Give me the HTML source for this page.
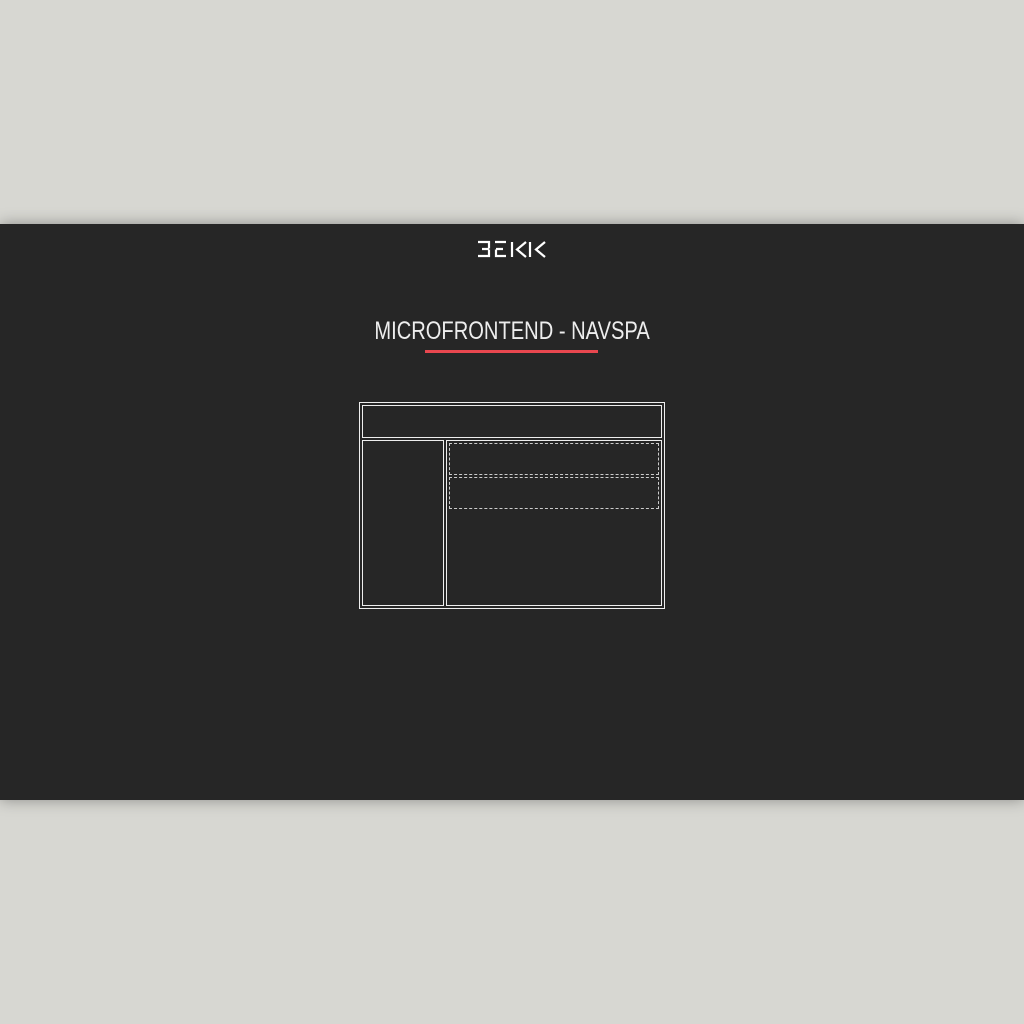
<!DOCTYPE html>
<html><head><style>
body{margin:0;width:1024px;height:1024px;background:#d7d7d2;position:relative;overflow:hidden;font-family:"Liberation Sans",sans-serif}
.band{position:absolute;left:0;top:224px;width:1024px;height:576px;background:#262626;box-shadow:0 0 14px rgba(0,0,0,.35)}
.t{position:absolute;left:0;width:1024px;top:316px;text-align:center;color:#eee;font-size:25px;line-height:30px}
.t span{display:inline-block;transform:scaleX(.805)}
.r{position:absolute;left:425px;top:350px;width:173px;height:3px;background:#e8474f}
.b{position:absolute;border:1.5px solid #eee;box-sizing:border-box}
.d{position:absolute;border:1.5px dashed #ccc;box-sizing:border-box}
</style></head><body>
<div class="band"></div>
<svg style="position:absolute;left:0;top:0" width="1024" height="300">
<g fill="none" stroke="#fff" stroke-width="2.2">
<path d="M478 242H489V248.5M482 249H489M489 249.5V256H478"/>
<path d="M506 242H495M496 249H503M496 249.5V256H506"/>
<path d="M512 242V257M526 242L517 249.5L526 257"/>
<path d="M530 242V257M545 242L536 249.5L545 257"/>
</g></svg>
<div class="t"><span>MICROFRONTEND - NAVSPA</span></div>
<div class="r"></div>
<div class="b" style="left:359px;top:402px;width:306px;height:207px"></div>
<div class="b" style="left:362px;top:405px;width:300px;height:33px"></div>
<div class="b" style="left:362px;top:440px;width:82px;height:166px"></div>
<div class="b" style="left:446px;top:440px;width:216px;height:166px"></div>
<div class="d" style="left:449px;top:443px;width:210px;height:32px"></div>
<div class="d" style="left:449px;top:477px;width:210px;height:32px"></div>
</body></html>
